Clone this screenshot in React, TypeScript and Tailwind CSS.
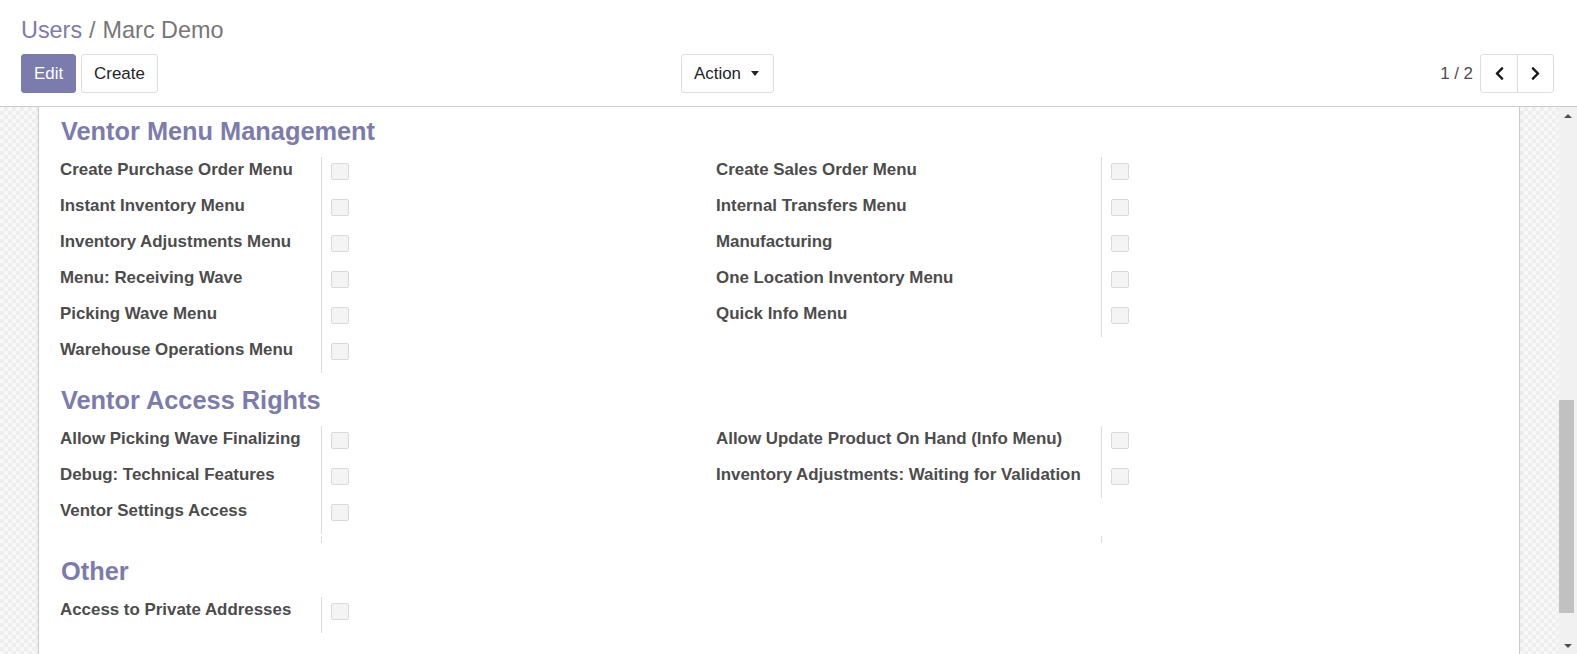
import { FaChevronLeft, FaChevronRight } from "react-icons/fa";

const menuLeft = [
  "Create Purchase Order Menu",
  "Instant Inventory Menu",
  "Inventory Adjustments Menu",
  "Menu: Receiving Wave",
  "Picking Wave Menu",
  "Warehouse Operations Menu",
];
const menuRight = [
  "Create Sales Order Menu",
  "Internal Transfers Menu",
  "Manufacturing",
  "One Location Inventory Menu",
  "Quick Info Menu",
];
const rightsLeft = [
  "Allow Picking Wave Finalizing",
  "Debug: Technical Features",
  "Ventor Settings Access",
];
const rightsRight = [
  "Allow Update Product On Hand (Info Menu)",
  "Inventory Adjustments: Waiting for Validation",
];

function Group({ labels, labelWidth }: { labels: string[]; labelWidth: string }) {
  return (
    <div className="flex">
      <div className={`${labelWidth} border-r border-[#dcdcdc]`}>
        {labels.map((l) => (
          <div key={l} className="h-[36px] pt-[3px] leading-[20px] font-bold text-[#4c4c4c] whitespace-nowrap">
            {l}
          </div>
        ))}
      </div>
      <div>
        {labels.map((l) => (
          <div key={l} className="h-[36px] pt-[6px] pl-[9px]">
            <div className="w-[18px] h-[17px] rounded-[2px] border border-[#d9d9d9] bg-[#f4f4f4]" />
          </div>
        ))}
      </div>
    </div>
  );
}

function Title({ children, top }: { children: string; top: string }) {
  return (
    <h2 className={`${top} mb-[11px] h-[30px] pl-[1px] leading-[30px] text-[25.35px] font-bold text-[#7C7BAD]`}>
      {children}
    </h2>
  );
}

export default function App() {
  return (
    <div className="h-[654px] w-[1577px] overflow-hidden bg-white text-[16.9px] font-['Liberation_Sans',Arial,sans-serif]">
      <div className="h-[107px] border-b border-[#cccccc] pl-[21px] pr-[23px] pt-[16px]">
        <div className="h-[28px] leading-[28px] text-[23.4px] text-[#777]">
          <span className="text-[#7C7BAD]">Users</span>
          <span className="mx-[7px]">/</span>
          <span>Marc Demo</span>
        </div>
        <div className="mt-[10px] flex h-[39px] items-center">
          <div className="flex w-[753px] items-center">
            <button className="h-[39px] rounded-[3px] border border-[#7C7BAD] bg-[#7C7BAD] px-[12px] text-white">
              Edit
            </button>
            <button className="ml-[5px] h-[39px] rounded-[3px] border border-[#dedede] bg-white px-[12px] text-[#212529]">
              Create
            </button>
            <button className="ml-auto flex h-[39px] items-center rounded-[3px] border border-[#dedede] bg-white pl-[12px] pr-[14px] text-[#212529]">
              Action
              <span className="ml-[10px] h-0 w-0 border-x-[4.5px] border-t-[5px] border-x-transparent border-t-[#212529]" />
            </button>
          </div>
          <div className="ml-auto flex items-center">
            <span className="text-[#4c4c4c]">1 / 2</span>
            <div className="ml-[7px] flex h-[39px] rounded-[3px] border border-[#dedede]">
              <button className="flex w-[37px] items-center justify-center border-r border-[#dedede] text-[#1a1a1a]">
                <FaChevronLeft size={15} />
              </button>
              <button className="flex w-[35px] items-center justify-center text-[#1a1a1a]">
                <FaChevronRight size={15} />
              </button>
            </div>
          </div>
        </div>
      </div>

      <div className="flex h-[547px]">
        <div className="flex-1 overflow-hidden bg-[#f6f6f6] bg-[image:repeating-conic-gradient(#eeeeee_0%_25%,#f8f8f8_0%_50%)] bg-[length:8px_8px]">
          <div className="mx-[38px] h-full border-x border-[#cccccc] bg-white pl-[21px] pt-[9px] shadow-[0_0_6px_rgba(0,0,0,0.05)]">
            <Title top="mt-0">Ventor Menu Management</Title>
            <div className="flex items-start">
              <div className="w-[656px]">
                <Group labels={menuLeft} labelWidth="w-[262px]" />
              </div>
              <Group labels={menuRight} labelWidth="w-[386px]" />
            </div>

            <Title top="mt-[12px]">Ventor Access Rights</Title>
            <div className="flex items-start">
              <div className="w-[656px]">
                <Group labels={rightsLeft} labelWidth="w-[262px]" />
              </div>
              <Group labels={rightsRight} labelWidth="w-[386px]" />
            </div>
            <div className="mt-[2px] flex h-[7px]">
              <div className="w-[656px]">
                <div className="h-full w-[262px] border-r border-[#dcdcdc]" />
              </div>
              <div className="h-full w-[386px] border-r border-[#dcdcdc]" />
            </div>

            <Title top="mt-[13px]">Other</Title>
            <Group labels={["Access to Private Addresses"]} labelWidth="w-[262px]" />
          </div>
        </div>

        <div className="flex w-[19px] flex-col bg-[#f1f1f1]">
          <div className="flex h-[17px] items-center justify-center">
            <span className="h-0 w-0 border-x-[4px] border-b-[4px] border-x-transparent border-b-[#505050]" />
          </div>
          <div className="flex-1">
            <div className="ml-[1px] mt-[276px] h-[213px] w-[15px] bg-[#c1c1c1]" />
          </div>
          <div className="flex h-[17px] items-center justify-center">
            <span className="h-0 w-0 border-x-[4px] border-t-[4px] border-x-transparent border-t-[#505050]" />
          </div>
        </div>
      </div>
    </div>
  );
}
